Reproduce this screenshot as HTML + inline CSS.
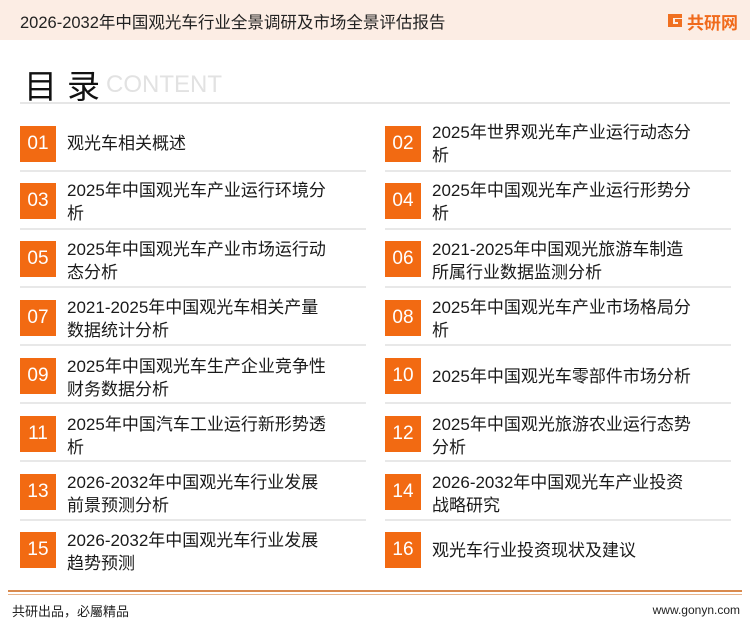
<!DOCTYPE html>
<html><head><meta charset="utf-8"><style>
*{margin:0;padding:0;box-sizing:border-box}
body{width:750px;height:622px;background:#fff;position:relative;overflow:hidden;font-family:"Liberation Sans","Noto Sans CJK SC",sans-serif;color:#222}
.hd{position:absolute;left:0;top:0;width:750px;height:40px;background:#fcede4}
.ttl{position:absolute;left:20px;top:9px;font-size:16.5px;color:#222}
.logo{position:absolute;left:666px;top:11px;height:18px}
.lt{position:absolute;left:687px;top:9px;font-size:17px;font-weight:bold;color:#f06a1c}
.mu{position:absolute;left:24px;top:60px;font-size:33px;color:#111;letter-spacing:10px}
.ct{position:absolute;left:106px;top:71px;font-size:24px;color:#e2e2e2}
.hl{position:absolute;left:20px;top:102px;width:710px;height:2px;background:#e6e6e6}
.b{position:absolute;width:36px;height:36px;background:#f26a12;color:#fff;font-size:19px;text-align:center;line-height:36px}
.t{position:absolute;font-size:17px;line-height:23px;color:#1a1a1a;white-space:nowrap}
.s{position:absolute;height:2px;background:#e8e8e8}
.ft1{position:absolute;left:8px;top:590px;width:734px;height:2px;background:#d98a4e}
.ft2{position:absolute;left:8px;top:594px;width:734px;height:1px;background:#e8b48a}
.fl{position:absolute;left:12px;top:601px;font-size:13px}
.fr{position:absolute;right:10px;top:603px;font-size:12px}
</style></head><body>
<div class="hd"></div>
<div class="ttl">2026-2032年中国观光车行业全景调研及市场全景评估报告</div>
<svg class="logo" viewBox="0 0 18 18" width="18" height="18"><path d="M2 3h14v4h-9v6h5v-2h-3v-3h7v8H2z" fill="#f07020"/></svg>
<div class="lt">共研网</div>
<div class="mu">目录</div>
<div class="ct">CONTENT</div>
<div class="hl"></div>

<div class="b" style="left:20px;top:126px">01</div><div class="t" style="left:67px;top:132px">观光车相关概述</div>
<div class="b" style="left:385px;top:126px">02</div><div class="t" style="left:432px;top:121px">2025年世界观光车产业运行动态分<br>析</div>
<div class="s" style="left:20px;top:170px;width:346px"></div><div class="s" style="left:385px;top:170px;width:346px"></div>

<div class="b" style="left:20px;top:183px">03</div><div class="t" style="left:67px;top:179px">2025年中国观光车产业运行环境分<br>析</div>
<div class="b" style="left:385px;top:183px">04</div><div class="t" style="left:432px;top:179px">2025年中国观光车产业运行形势分<br>析</div>
<div class="s" style="left:20px;top:228px;width:346px"></div><div class="s" style="left:385px;top:228px;width:346px"></div>

<div class="b" style="left:20px;top:241px">05</div><div class="t" style="left:67px;top:238px">2025年中国观光车产业市场运行动<br>态分析</div>
<div class="b" style="left:385px;top:241px">06</div><div class="t" style="left:432px;top:238px">2021-2025年中国观光旅游车制造<br>所属行业数据监测分析</div>
<div class="s" style="left:20px;top:286px;width:346px"></div><div class="s" style="left:385px;top:286px;width:346px"></div>

<div class="b" style="left:20px;top:300px">07</div><div class="t" style="left:67px;top:296px">2021-2025年中国观光车相关产量<br>数据统计分析</div>
<div class="b" style="left:385px;top:300px">08</div><div class="t" style="left:432px;top:296px">2025年中国观光车产业市场格局分<br>析</div>
<div class="s" style="left:20px;top:344px;width:346px"></div><div class="s" style="left:385px;top:344px;width:346px"></div>

<div class="b" style="left:20px;top:358px">09</div><div class="t" style="left:67px;top:355px">2025年中国观光车生产企业竞争性<br>财务数据分析</div>
<div class="b" style="left:385px;top:358px">10</div><div class="t" style="left:432px;top:365px">2025年中国观光车零部件市场分析</div>
<div class="s" style="left:20px;top:402px;width:346px"></div><div class="s" style="left:385px;top:402px;width:346px"></div>

<div class="b" style="left:20px;top:416px">11</div><div class="t" style="left:67px;top:413px">2025年中国汽车工业运行新形势透<br>析</div>
<div class="b" style="left:385px;top:416px">12</div><div class="t" style="left:432px;top:413px">2025年中国观光旅游农业运行态势<br>分析</div>
<div class="s" style="left:20px;top:460px;width:346px"></div><div class="s" style="left:385px;top:460px;width:346px"></div>

<div class="b" style="left:20px;top:474px">13</div><div class="t" style="left:67px;top:471px">2026-2032年中国观光车行业发展<br>前景预测分析</div>
<div class="b" style="left:385px;top:474px">14</div><div class="t" style="left:432px;top:471px">2026-2032年中国观光车产业投资<br>战略研究</div>
<div class="s" style="left:20px;top:519px;width:346px"></div><div class="s" style="left:385px;top:519px;width:346px"></div>

<div class="b" style="left:20px;top:532px">15</div><div class="t" style="left:67px;top:529px">2026-2032年中国观光车行业发展<br>趋势预测</div>
<div class="b" style="left:385px;top:532px">16</div><div class="t" style="left:432px;top:539px">观光车行业投资现状及建议</div>

<div class="ft1"></div><div class="ft2"></div>
<div class="fl">共研出品，必屬精品</div>
<div class="fr">www.gonyn.com</div>
</body></html>
